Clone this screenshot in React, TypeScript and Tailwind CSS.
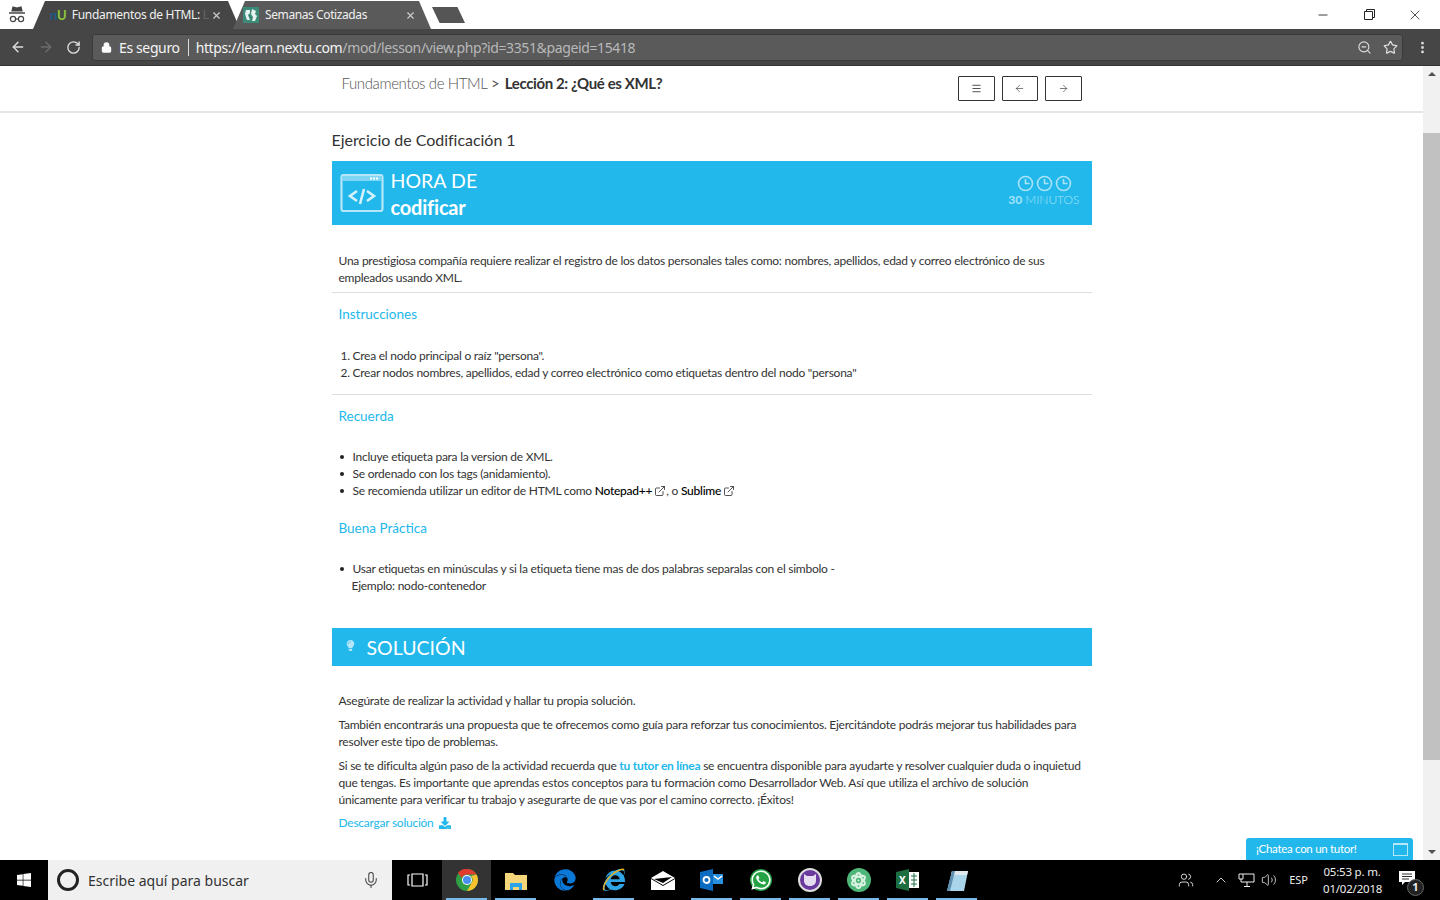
import { ArrowLeft, ArrowRight, Lock, Mic, Menu, RotateCw, ZoomOut, Star, X, Minus, ExternalLink, EllipsisVertical, ChevronUp, Volume2, Users } from 'lucide-react'
import { FaDownload, FaEdge, FaInternetExplorer, FaWhatsapp, FaWindows, FaAtom, FaLightbulb } from 'react-icons/fa'

function ClockIcon() {
  return (
    <svg width="17" height="17" viewBox="0 0 17 17" fill="none" stroke="#a8e3f8" strokeWidth="1.6">
      <circle cx="8.5" cy="8.5" r="7" />
      <path d="M8.5 4v4.5h4" />
    </svg>
  )
}

function ChromeLogo() {
  return (
    <svg width="22" height="22" viewBox="0 0 22 22">
      <circle cx="11" cy="11" r="11" fill="#2f9e44" />
      <path d="M11 0a11 11 0 0 1 9.5 5.5H11a5.5 5.5 0 0 0-5.2 3.6L2 4a11 11 0 0 1 9-4z" fill="#e33b2e" />
      <path d="M20.5 5.5A11 11 0 0 1 11 22l4.7-8.2A5.5 5.5 0 0 0 15 7z" fill="#fbc02d" />
      <circle cx="11" cy="11" r="5" fill="#fff" />
      <circle cx="11" cy="11" r="4" fill="#4a8ef0" />
    </svg>
  )
}

function TaskIcon({ active, children }: { active?: boolean; children: React.ReactNode }) {
  return (
    <div className={active ? 'relative flex h-10 w-[49px] items-center justify-center bg-[#333]' : 'relative flex h-10 w-[49px] items-center justify-center'}>
      {children}
      {active !== undefined && <span className="absolute bottom-0 left-[4px] right-[4px] h-[2px] bg-[#76b9ed]" />}
    </div>
  )
}

function BrowserBar() {
  return (
    <div className="h-[66px] shrink-0 font-['Noto_Sans',sans-serif]">
      <div className="flex h-[29px] items-end justify-between bg-white">
        <div className="flex items-end">
          <div className="flex h-[28px] w-[33px] items-center justify-center">
            <svg width="18" height="20" viewBox="0 0 18 20" fill="none" stroke="#444" strokeWidth="1.2">
              <path d="M4 6l1-4 4 1 4-1 1 4z" fill="#444" />
              <path d="M1 8h16" strokeWidth="1.5" />
              <circle cx="5" cy="14" r="2.6" />
              <circle cx="13" cy="14" r="2.6" />
              <path d="M7.6 14h2.8" />
            </svg>
          </div>
          <div className="flex h-[28px] w-[207px] items-center bg-[#464646] pl-[17px] pr-[18px] text-[12px] tracking-[-0.3px] text-[#f0f0f0] [clip-path:polygon(0_100%,12px_0,calc(100%-12px)_0,100%_100%)]">
            <span className="text-[13px] font-bold leading-none tracking-normal text-[#8cc63f] font-['Lato',sans-serif]"><span className="text-[#1b5a8c]">n</span>U</span>
            <span className="ml-[5px] whitespace-nowrap">Fundamentos de HTML: <span className="text-[#666]">L</span></span>
            <X className="ml-auto h-[11px] w-[11px] text-[#ccc]" strokeWidth={2.5} />
          </div>
          <div className="-ml-[7px] flex h-[28px] w-[198px] items-center bg-[#5a5a5a] pl-[10px] pr-[15px] text-[12px] tracking-[-0.4px] text-[#f0f0f0] [clip-path:polygon(0_100%,12px_0,calc(100%-12px)_0,100%_100%)]">
            <svg width="16" height="16" viewBox="0 0 16 16" className="shrink-0">
              <rect width="16" height="16" fill="#3c8a78" />
              <path d="M3 3h4v3L5 8l2 5H4L2 7zM9 2l4 2-1 3 2 2-2 5H9l1-4-2-3z" fill="#e8f3f0" />
            </svg>
            <span className="ml-[6px] whitespace-nowrap">Semanas Cotizadas</span>
            <X className="ml-auto h-[11px] w-[11px] text-[#ccc]" strokeWidth={2.5} />
          </div>
          <div className="mb-[6px] ml-[1px] h-[16px] w-[33px] bg-[#555] [clip-path:polygon(0_0,77%_0,100%_100%,23%_100%)]" />
        </div>
        <div className="mr-[2px] flex h-[29px] items-center text-[#222]">
          <div className="flex w-[46px] justify-center"><Minus className="h-[14px] w-[14px]" strokeWidth={1.5} /></div>
          <div className="flex w-[46px] justify-center">
            <svg width="11" height="11" viewBox="0 0 11 11" fill="none" stroke="#222"><path d="M.5 2.5h8v8h-8zM2.5 2.500v-2h8v8h-2" /></svg>
          </div>
          <div className="flex w-[46px] justify-center"><X className="h-[16px] w-[16px]" strokeWidth={1.2} /></div>
        </div>
      </div>
      <div className="flex h-[37px] items-center bg-[#464646] border-b border-[#333]">
        <div className="flex w-[92px] items-center pl-[10px] gap-[8px]">
          <ArrowLeft className="h-[16px] w-[16px] text-[#ddd]" strokeWidth={2.2} />
          <ArrowRight className="ml-[4px] h-[16px] w-[16px] text-[#6c6c6c]" strokeWidth={2.2} />
          <RotateCw className="ml-[4px] h-[15px] w-[15px] text-[#ddd]" strokeWidth={2.2} />
        </div>
        <div className="flex h-[27px] w-[1311px] items-center rounded-[3px] border border-[#3a3a3a] bg-[#5a5a5a] pl-[8px] pr-[4px] text-[14px] tracking-[-0.37px] text-[#f4f4f4]">
          <Lock className="h-[11px] w-[11px] fill-white text-white" strokeWidth={2.5} />
          <span className="ml-[7px]">Es seguro</span>
          <span className="ml-[8px] mr-[7px] h-[17px] w-px bg-[#ddd]" />
          <span>https://learn.nextu.com<span className="text-[#b8b8b8]">/mod/lesson/view.php?id=3351&amp;pageid=15418</span></span>
          <ZoomOut className="ml-auto h-[15px] w-[15px] text-[#ddd]" strokeWidth={1.8} />
          <Star className="ml-[11px] h-[15px] w-[15px] text-[#ddd]" strokeWidth={2} />
        </div>
        <EllipsisVertical className="ml-[12px] h-[15px] w-[15px] text-[#ddd]" strokeWidth={2.5} />
      </div>
    </div>
  )
}

function Bullet({ children }: { children: React.ReactNode }) {
  return (
    <li className="flex h-[17px]">
      <span className="mr-[9px] mt-[7px] ml-[1px] h-[4px] w-[4px] rounded-full bg-[#222]" />
      <span>{children}</span>
    </li>
  )
}

function Lesson() {
  return (
    <div className="w-[760px] text-[12px] leading-[17px] tracking-[-0.25px] text-[#333] font-['Lato',sans-serif]">
      <h2 className="mt-[16px] text-[16px] leading-[22px] tracking-[-0.03px] text-[#333]">Ejercicio de Codificación 1</h2>

      <div className="mt-[10px] flex h-[64px] items-center bg-[#22b8eb] pl-[8px] pr-[12px] tracking-normal text-white">
        <svg width="44" height="38" viewBox="0 0 44 38" fill="none" stroke="#b5e7f9">
          <rect x="1.500" y="1" width="41" height="36" rx="2" strokeWidth="2.200" />
          <path d="M2 4.500h40" strokeWidth="5" stroke="#7fd6f4" />
          <path d="M30 4.500h8" strokeWidth="2" stroke="#fff" strokeDasharray="2 1" />
          <path d="M17 17l-7 5 7 5M27 17l7 5-7 5M24 15l-4 15" strokeWidth="2.600" stroke="#d5f2fc" />
        </svg>
        <div className="ml-[7px] pt-[1px]">
          <div className="text-[19.500px] leading-[26px] tracking-[0.05px]">HORA DE</div>
          <div className="text-[20px] font-bold leading-[26px] tracking-[-0.2px]">codificar</div>
        </div>
        <div className="ml-auto mb-[4px] flex flex-col items-center text-[#a8e3f8]">
          <div className="flex translate-x-[1px] gap-[2px]"><ClockIcon /><ClockIcon /><ClockIcon /></div>
          <div className="text-[12px] leading-[16px]"><b>30</b> <span className="font-light">MINUTOS</span></div>
        </div>
      </div>

      <p className="mt-[27px] px-[7px]">
        Una prestigiosa compañía requiere realizar el registro de los datos personales tales como: nombres, apellidos, edad y correo electrónico de sus empleados usando XML.
      </p>
      <hr className="mt-[6px] border-[#ddd]" />

      <h3 className="mt-[13px] px-[7px] text-[13.500px] leading-[17px] tracking-normal text-[#22b8eb]">Instrucciones</h3>
      <ol className="mt-[24px] px-[7px]">
        <li className="flex"><span className="w-[14px] pl-[2px]">1.</span>Crea el nodo principal o raíz "persona".</li>
        <li className="flex"><span className="w-[14px] pl-[2px]">2.</span>Crear nodos nombres, apellidos, edad y correo electrónico como etiquetas dentro del nodo "persona"</li>
      </ol>
      <hr className="mt-[13px] border-[#ddd]" />

      <h3 className="mt-[13px] px-[7px] text-[13.500px] leading-[17px] tracking-normal text-[#22b8eb]">Recuerda</h3>
      <ul className="mt-[23px] px-[7px]">
        <Bullet>Incluye etiqueta para la version de XML.</Bullet>
        <Bullet>Se ordenado con los tags (anidamiento).</Bullet>
        <Bullet>
          Se recomienda utilizar un editor de HTML como <span className="font-medium text-black">Notepad++</span>
          <ExternalLink className="ml-[2px] inline h-[12px] w-[12px] -translate-y-[1px]" strokeWidth={1.7} />, o <span className="font-medium text-black">Sublime</span>
          <ExternalLink className="ml-[2px] inline h-[12px] w-[12px] -translate-y-[1px]" strokeWidth={1.7} />
        </Bullet>
      </ul>

      <h3 className="mt-[21px] px-[7px] text-[13.500px] leading-[17px] tracking-normal text-[#22b8eb]">Buena Práctica</h3>
      <ul className="mt-[23px] px-[7px]">
        <Bullet>Usar etiquetas en minúsculas y si la etiqueta tiene mas de dos palabras separalas con el simbolo -</Bullet>
        <li className="pl-[13px]">Ejemplo: nodo-contenedor</li>
      </ul>

      <div className="mt-[34px] flex h-[38px] items-center bg-[#22b8eb] pl-[13px] tracking-normal text-white">
        <FaLightbulb className="mb-[4px] h-[11px] w-[11px] text-[#b5e7f9]" />
        <span className="ml-[11px] text-[19.500px]">SOLUCIÓN</span>
      </div>

      <div className="px-[7px]">
        <p className="mt-[26px]">Asegúrate de realizar la actividad y hallar tu propia solución.</p>
        <p className="mt-[7px]">También encontrarás una propuesta que te ofrecemos como guía para reforzar tus conocimientos. Ejercitándote podrás mejorar tus habilidades para resolver este tipo de problemas.</p>
        <p className="mt-[7px]">
          Si se te dificulta algún paso de la actividad recuerda que <span className="font-bold text-[#22b8eb]">tu tutor en línea</span> se encuentra disponible para ayudarte y resolver cualquier duda o inquietud que tengas. Es importante que aprendas estos conceptos para tu formación como Desarrollador Web. Así que utiliza el archivo de solución únicamente para verificar tu trabajo y asegurarte de que vas por el camino correcto. ¡Éxitos!
        </p>
        <p className="mt-[6px] flex items-center text-[#22b8eb]">
          Descargar solución
          <FaDownload className="ml-[5px] h-[12px] w-[12px]" />
        </p>
      </div>
    </div>
  )
}

function Taskbar() {
  return (
    <div className="flex h-10 shrink-0 items-center bg-black font-['Noto_Sans',sans-serif] text-white">
      <div className="flex h-10 w-[48px] items-center justify-center"><FaWindows className="h-[16px] w-[16px]" /></div>
      <div className="flex h-10 w-[344px] items-center bg-[#f0f0f0] pl-[9px] pr-[12px] text-[14px] text-[#333]">
        <span className="h-[22px] w-[22px] rounded-full border-[3px] border-[#222]" />
        <span className="ml-[9px]">Escribe aquí para buscar</span>
        <Mic className="ml-auto h-[18px] w-[18px] text-[#444]" strokeWidth={1.4} />
      </div>
      <div className="flex h-10 w-[50px] items-center justify-center">
        <svg width="21" height="14" viewBox="0 0 21 14" fill="none" stroke="#fff" strokeWidth="1.2"><path d="M5 1h11v12H5zM3 2H1v10h2M18 2h2v10h-2" /></svg>
      </div>
      <TaskIcon active><ChromeLogo /></TaskIcon>
      <TaskIcon active={false}>
        <svg width="22" height="19" viewBox="0 0 22 19"><path d="M0 2h8l2 2h12v15H0z" fill="#f6d67a" /><path d="M5 12h12v7h-3v-3H8v3H5z" fill="#2ea4e8" /></svg>
      </TaskIcon>
      <TaskIcon><FaEdge className="h-[22px] w-[22px] text-[#0a78d7]" /></TaskIcon>
      <TaskIcon active={false}>
        <span className="relative flex h-[24px] w-[24px] items-center justify-center">
          <FaInternetExplorer className="h-[22px] w-[22px] text-[#2fa5e6]" />
          <svg className="absolute inset-0" width="24" height="24" viewBox="0 0 24 24" fill="none" stroke="#e8b020" strokeWidth="1.500"><path d="M2 22c-2-3 3-12 10-17 5-3 9-5 10-3" /></svg>
        </span>
      </TaskIcon>
      <TaskIcon>
        <svg width="24" height="19" viewBox="0 0 24 19"><path d="M0 7l12-7 12 7-12 7z" fill="#fff" /><path d="M0 8l12 7 12-7v11H0z" fill="#fff" /><path d="M3 8l18-2-9 6z" fill="#000" /></svg>
      </TaskIcon>
      <TaskIcon active={false}>
        <svg width="23" height="22" viewBox="0 0 23 22"><path d="M0 3l13-3v22L0 19z" fill="#0a6cc0" /><rect x="13" y="5" width="10" height="10" fill="#2a8fdc" /><path d="M14 7l4 3 4-3" stroke="#fff" strokeWidth="1.5" fill="none" /><circle cx="6.500" cy="11" r="3" stroke="#fff" strokeWidth="1.800" fill="none" /></svg>
      </TaskIcon>
      <TaskIcon active={false}>
        <span className="flex h-[22px] w-[22px] items-center justify-center rounded-full bg-[#25a244]"><FaWhatsapp className="h-[22px] w-[22px] text-white" /></span>
      </TaskIcon>
      <TaskIcon active={false}>
        <span className="flex h-[24px] w-[24px] items-center justify-center rounded-full border-2 border-[#ddd] bg-[#6b3a9e]">
          <svg width="14" height="12" viewBox="0 0 14 12"><path d="M1 0l3 2h6l3-2v7c0 3-3 5-6 5s-6-2-6-5z" fill="#e6def0" /></svg>
        </span>
      </TaskIcon>
      <TaskIcon active={false}>
        <span className="flex h-[24px] w-[24px] items-center justify-center rounded-full bg-[#4fb67a]"><FaAtom className="h-[17px] w-[17px] text-[#d8f2e2]" /></span>
      </TaskIcon>
      <TaskIcon active={false}>
        <svg width="23" height="22" viewBox="0 0 23 22"><path d="M0 3l13-3v22L0 19z" fill="#1d6f42" /><path d="M13 3h10v16H13z" fill="#fff" /><path d="M15 7h6M15 11h6M15 15h6M18 4v14" stroke="#1d6f42" strokeWidth="1" /><text x="3" y="15" fontSize="10" fontWeight="700" fill="#fff">X</text></svg>
      </TaskIcon>
      <TaskIcon active={false}>
        <svg width="22" height="22" viewBox="0 0 22 22"><path d="M6 2h16l-4 20H1z" fill="#a9d4ea" /><path d="M6 2h16l-1 4H5z" fill="#dfe7ec" /><path d="M6 2L1 22h3l5-20z" fill="#5e8fb0" /></svg>
      </TaskIcon>

      <div className="ml-auto flex h-10 items-center text-[#eee]">
        <Users className="h-[16px] w-[16px]" strokeWidth={1.3} />
        <ChevronUp className="ml-[19px] h-[16px] w-[16px]" strokeWidth={1.3} />
        <svg className="ml-[9px]" width="17" height="15" viewBox="0 0 17 15" fill="none" stroke="#eee"><path d="M5 1H1v5h4zM3 6v3h13V1H5M9 9v4M6 13.500h6" /></svg>
        <Volume2 className="ml-[6px] h-[16px] w-[16px]" strokeWidth={1.2} />
        <span className="ml-[12px] text-[11px]">ESP</span>
        <div className="ml-[15px] w-[58px] text-center text-[11.500px] leading-[17px] tracking-[-0.2px] whitespace-nowrap">
          <div>05:53 p. m.</div>
          <div>01/02/2018</div>
        </div>
        <div className="relative ml-[18px] mr-[23px] h-[20px] w-[18px]">
          <svg width="16" height="16" viewBox="0 0 16 16"><path d="M0 1h16v11H6l-3 3v-3H0z" fill="#fff" /><path d="M3 4h10M3 6.500h10M3 9h7" stroke="#333" /></svg>
          <span className="absolute -right-[7px] bottom-[-6px] flex h-[17px] w-[17px] items-center justify-center rounded-full border border-[#666] bg-[#222] text-[11px] font-bold">1</span>
        </div>
      </div>
    </div>
  )
}

export default function App() {
  return (
    <div className="flex h-[900px] w-[1440px] flex-col overflow-hidden bg-white">
      <BrowserBar />
      <div className="relative flex min-h-0 flex-1">
        <div className="min-w-0 flex-1 overflow-hidden">
          <div className="flex h-[47px] justify-center border-b-2 border-[#e5e5e5] font-['Lato',sans-serif]">
            <div className="flex w-[740px] items-start pt-[8px]">
              <div className="-mt-[1px] text-[15px] leading-[20px] tracking-[-0.38px] text-[#555]">
                <span className="font-light">Fundamentos de HTML</span> &gt; <span className="ml-[2px] font-bold text-[#333]">Lección 2: ¿Qué es XML?</span>
              </div>
              <div className="ml-auto flex gap-[7px] pt-[2px]">
                <button className="flex h-[25px] w-[37px] items-center justify-center rounded-[1px] border border-[#333]"><Menu className="h-[11px] w-[11px] text-[#444]" /></button>
                <button className="flex h-[25px] w-[36px] items-center justify-center rounded-[1px] border border-[#333]"><ArrowLeft className="h-[11px] w-[11px] text-[#444]" strokeWidth={1.5} /></button>
                <button className="flex h-[25px] w-[37px] items-center justify-center rounded-[1px] border border-[#333]"><ArrowRight className="h-[11px] w-[11px] text-[#444]" strokeWidth={1.5} /></button>
              </div>
            </div>
          </div>
          <div className="flex justify-center"><Lesson /></div>
        </div>
        <div className="flex w-[17px] shrink-0 flex-col items-center bg-[#f1f1f1]">
          <div className="mt-[6px] h-0 w-0 border-x-[4px] border-b-[4px] border-x-transparent border-b-[#505050]" />
          <div className="mt-[57px] h-[627px] w-[17px] bg-[#c1c1c1]" />
          <div className="mt-auto mb-[6px] h-0 w-0 border-x-[4px] border-t-[4px] border-x-transparent border-t-[#505050]" />
        </div>
        <div className="absolute bottom-0 left-[1246px] flex h-[22px] w-[167px] items-center rounded-t-[3px] bg-[#22b8eb] pl-[10px] pr-[5px] font-['Lato',sans-serif] text-[11.500px] tracking-[-0.3px] text-white">
          ¡Chatea con un tutor!
          <span className="ml-auto h-[13px] w-[15px] border border-[#b5e7f9] border-t-2" />
        </div>
      </div>
      <Taskbar />
    </div>
  )
}
